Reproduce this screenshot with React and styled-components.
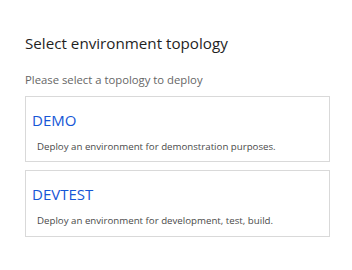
import React from 'react';
import styled, { createGlobalStyle } from 'styled-components';

const GlobalStyle = createGlobalStyle`
  html, body {
    margin: 0;
    padding: 0;
    background: #ffffff;
  }
  body {
    font-family: "Segoe UI", "Open Sans", "Noto Sans", sans-serif;
  }
`;

const Page = styled.div`
  width: 305px;
  padding: 32px 0 0 25px;
`;

const Title = styled.h1`
  margin: 0;
  font-size: 15.2px;
  line-height: 22px;
  font-weight: 400;
  color: #1f1f1f;
`;

const Subtitle = styled.p`
  margin: 17px 0 0;
  font-size: 11.3px;
  line-height: 17px;
  color: #666666;
`;

const List = styled.div`
  display: flex;
  flex-direction: column;
  gap: 8px;
  margin-top: 8px;
`;

const Card = styled.div`
  box-sizing: border-box;
  height: ${(p) => p.$height}px;
  border: 1px solid #d9d9d9;
  padding: 12px 6px 0;
  cursor: pointer;
`;

const CardTitle = styled.div`
  font-size: 15px;
  line-height: 22px;
  color: #1556d6;
`;

const CardText = styled.div`
  margin-top: 9px;
  padding-left: 5px;
  font-size: 9.7px;
  line-height: 14px;
  color: #4a4a4a;
`;

const topologies = [
  { name: 'DEMO', text: 'Deploy an environment for demonstration purposes.', height: 66 },
  { name: 'DEVTEST', text: 'Deploy an environment for development, test, build.', height: 67 },
];

export default function App() {
  return (
    <>
      <GlobalStyle />
      <Page>
        <Title>Select environment topology</Title>
        <Subtitle>Please select a topology to deploy</Subtitle>
        <List>
          {topologies.map((t) => (
            <Card key={t.name} $height={t.height}>
              <CardTitle>{t.name}</CardTitle>
              <CardText>{t.text}</CardText>
            </Card>
          ))}
        </List>
      </Page>
    </>
  );
}
